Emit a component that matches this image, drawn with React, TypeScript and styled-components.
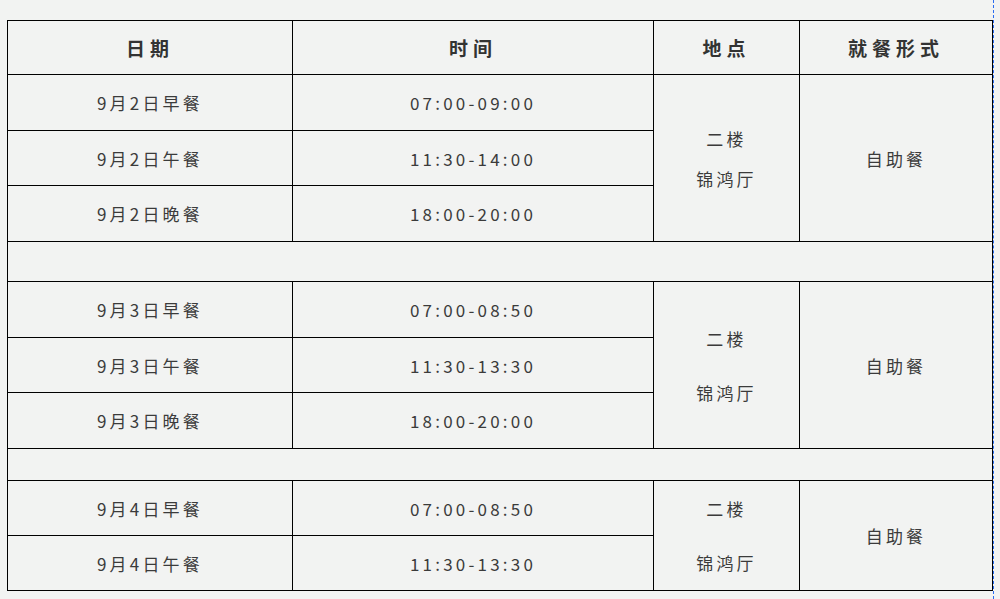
import React from 'react';
import styled, { createGlobalStyle } from 'styled-components';

const GlobalStyle = createGlobalStyle`
  html, body {
    margin: 0;
    padding: 0;
    background: #f2f3f2;
  }
`;

const Page = styled.div`
  box-sizing: border-box;
  width: 994px;
  height: 599px;
  padding: 20px 0 0 7px;
  border-right: 1px dashed #2a6cf0;
  overflow: hidden;
  font-family: 'Noto Sans CJK SC', 'Noto Sans', sans-serif;
  color: #3b3b3b;
`;

const Table = styled.table`
  width: 985px;
  border-collapse: collapse;
  table-layout: fixed;
`;

const Col = styled.col<{ $w: number }>`
  width: ${(p) => p.$w}px;
`;

const HeadCell = styled.th`
  height: 53px;
  padding: 0;
  border: 1px solid #000;
  font-size: 19px;
  font-weight: 700;
  letter-spacing: 5px;
  color: #333;
  text-align: center;
`;

const Row = styled.tr<{ $h: number }>`
  height: ${(p) => p.$h}px;
`;

const Cell = styled.td`
  padding: 0;
  border: 1px solid #000;
  font-size: 17px;
  letter-spacing: 3.2px;
  text-align: center;
  vertical-align: middle;
`;

const Spacer = styled.td`
  padding: 0;
  border: 1px solid #000;
`;

const Place = styled.div<{ $gap: number }>`
  display: flex;
  flex-direction: column;
  align-items: center;
  gap: ${(p) => p.$gap}px;
`;

type Meal = { date: string; time: string; h: number };
type Group = { meals: Meal[]; gap: number; after?: number };

const groups: Group[] = [
  {
    meals: [
      { date: '9月2日早餐', time: '07:00-09:00', h: 56 },
      { date: '9月2日午餐', time: '11:30-14:00', h: 55 },
      { date: '9月2日晚餐', time: '18:00-20:00', h: 56 },
    ],
    gap: 15,
    after: 40,
  },
  {
    meals: [
      { date: '9月3日早餐', time: '07:00-08:50', h: 56 },
      { date: '9月3日午餐', time: '11:30-13:30', h: 55 },
      { date: '9月3日晚餐', time: '18:00-20:00', h: 56 },
    ],
    gap: 29,
    after: 32,
  },
  {
    meals: [
      { date: '9月4日早餐', time: '07:00-08:50', h: 55 },
      { date: '9月4日午餐', time: '11:30-13:30', h: 55 },
    ],
    gap: 29,
  },
];

const App = () => (
  <>
    <GlobalStyle />
    <Page>
      <Table>
        <colgroup>
          <Col $w={285} />
          <Col $w={361} />
          <Col $w={146} />
          <Col $w={193} />
        </colgroup>
        <thead>
          <tr>
            <HeadCell>日期</HeadCell>
            <HeadCell>时间</HeadCell>
            <HeadCell>地点</HeadCell>
            <HeadCell>就餐形式</HeadCell>
          </tr>
        </thead>
        <tbody>
          {groups.map((g, gi) => (
            <React.Fragment key={gi}>
              {g.meals.map((m, i) => (
                <Row $h={m.h} key={m.date}>
                  <Cell>{m.date}</Cell>
                  <Cell>{m.time}</Cell>
                  {i === 0 && (
                    <>
                      <Cell rowSpan={g.meals.length}>
                        <Place $gap={g.gap}>
                          <span>二楼</span>
                          <span>锦鸿厅</span>
                        </Place>
                      </Cell>
                      <Cell rowSpan={g.meals.length}>自助餐</Cell>
                    </>
                  )}
                </Row>
              ))}
              {g.after && (
                <Row $h={g.after}>
                  <Spacer colSpan={4} />
                </Row>
              )}
            </React.Fragment>
          ))}
        </tbody>
      </Table>
    </Page>
  </>
);

export default App;
